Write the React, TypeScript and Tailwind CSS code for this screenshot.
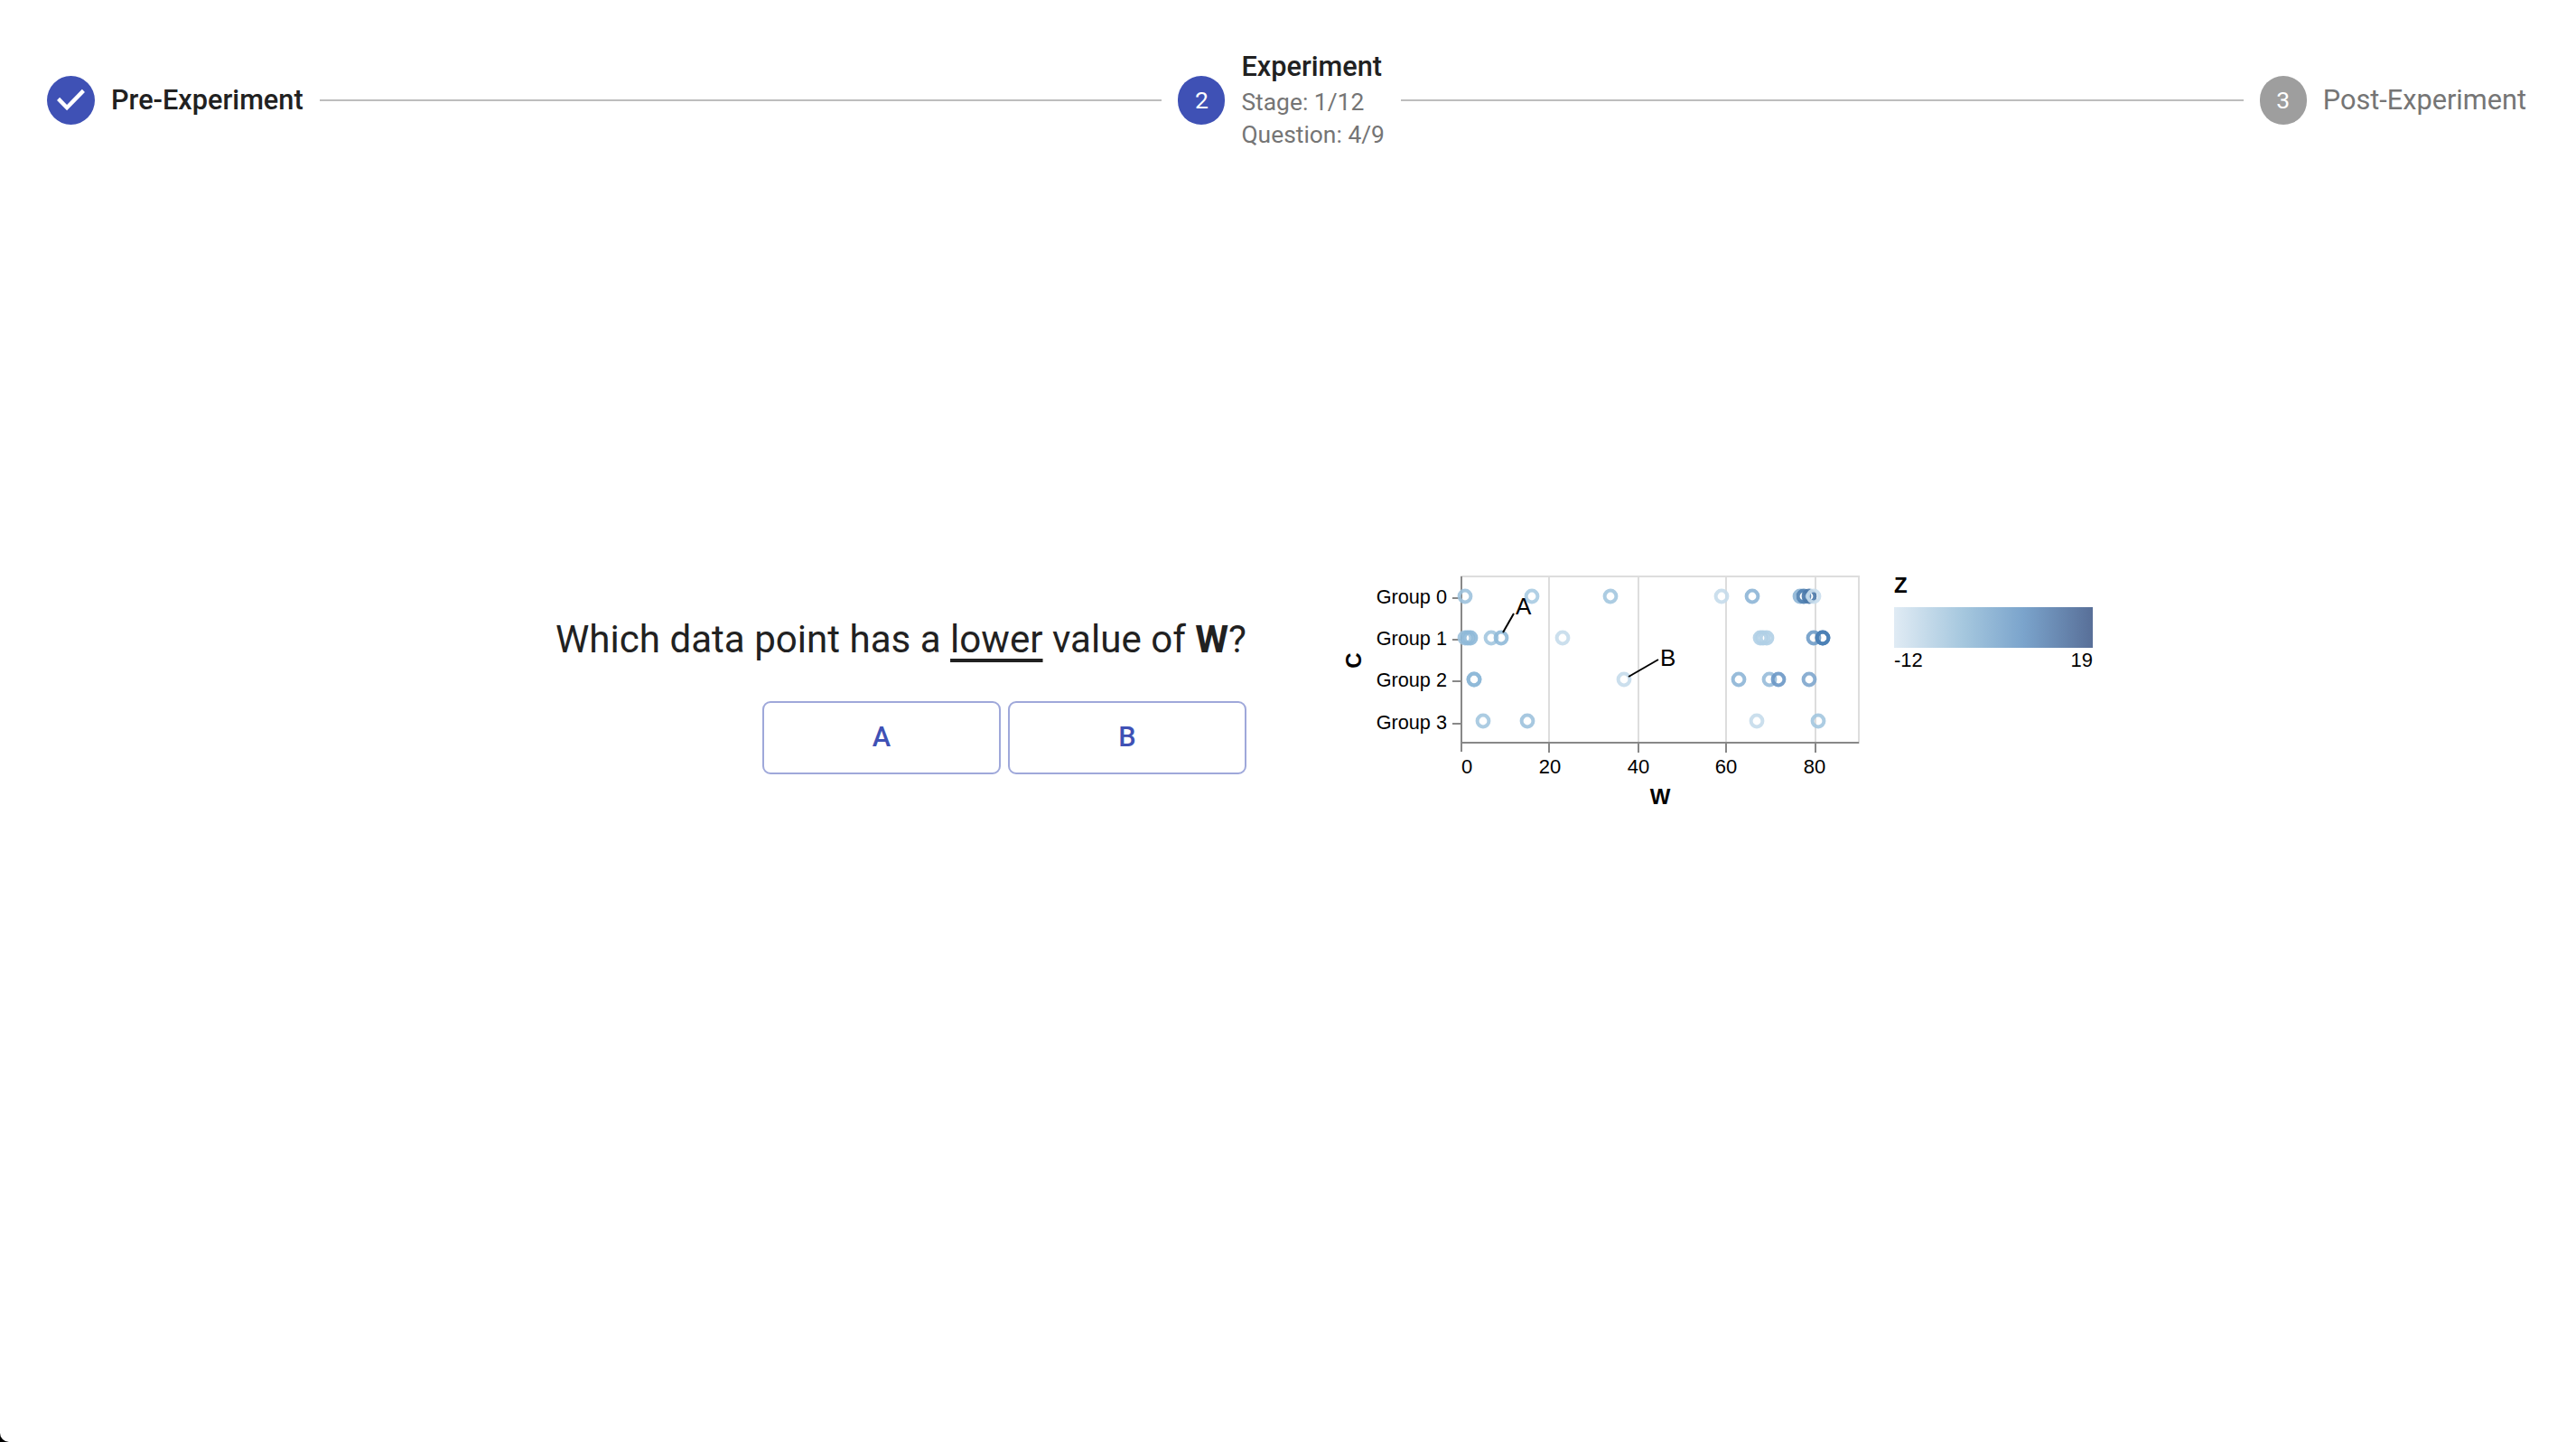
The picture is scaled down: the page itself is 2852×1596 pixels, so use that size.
import React from 'react';

// [x, y, colour] in chart coordinates
const points: [number, number, string][] = [
  [1622, 660, '#9dc2dd'], [1696, 660, '#a9cbe2'], [1783, 660, '#a3c6df'], [1906, 660, '#c5dbeb'],
  [1940, 660, '#8db5d6'], [1993, 660, '#8db5d6'], [1997, 660, '#4f7fb0'], [2003, 660, '#4a78a8'], [2008, 660, '#c9deed'],
  [1622, 706, '#9dc2dd'], [1625, 706, '#8fb9d8'], [1628, 706, '#8fb9d8'], [1651, 706, '#a3c6df'], [1662, 706, '#8fb9d8'],
  [1730, 706, '#c5dbeb'], [1949, 706, '#b0cfe5'], [1952, 706, '#b0cfe5'], [1956, 706, '#b0cfe5'], [2008, 706, '#6f9cc8'],
  [2018, 706, '#4a80b5'], [2018, 706, '#4a80b5'],
  [1632, 752, '#8fb9d8'], [1632, 752, '#8fb9d8'], [1798, 752, '#c5dbeb'], [1925, 752, '#8db5d6'], [1959, 752, '#97bbd9'],
  [1969, 752, '#6a97c5'], [2003, 752, '#7ea6cd'],
  [1642, 798, '#a3c6df'], [1691, 798, '#9dc2dd'], [1945, 798, '#c5dbeb'], [2013, 798, '#a3c6df'],
];

const groups = ['Group 0', 'Group 1', 'Group 2', 'Group 3'];
const xTicks = [1715, 1814, 1911, 2010];

const Chart = () => (
  <svg width={860} height={290} viewBox="1480 620 860 290" className="block shrink-0" fontFamily="'Liberation Sans', Arial, sans-serif">
    <defs>
      <linearGradient id="zscale">
        <stop offset="0" stopColor="#e0ebf4" />
        <stop offset="0.35" stopColor="#a5c7de" />
        <stop offset="0.65" stopColor="#7ba4cc" />
        <stop offset="1" stopColor="#586f98" />
      </linearGradient>
    </defs>

    <rect x={1618} y={638} width={440} height={184} fill="none" stroke="#ddd" strokeWidth={2} />
    {xTicks.map((x) => (
      <line key={x} x1={x} x2={x} y1={638} y2={822} stroke="#ddd" strokeWidth={2} />
    ))}

    <line x1={1618} x2={1618} y1={638} y2={832} stroke="#888" strokeWidth={2} />
    <line x1={1618} x2={2058} y1={822} y2={822} stroke="#888" strokeWidth={2} />
    {xTicks.map((x) => (
      <line key={x} x1={x} x2={x} y1={822} y2={833} stroke="#888" strokeWidth={2} />
    ))}
    {groups.map((g, i) => {
      const y = [662, 708, 754, 801][i];
      return (
        <g key={g}>
          <line x1={1608} x2={1618} y1={y} y2={y} stroke="#888" strokeWidth={2} />
          <text x={1602} y={y + 6} textAnchor="end" fontSize={21.7}>{g}</text>
        </g>
      );
    })}

    {[['0', 1624], ['20', 1716], ['40', 1814], ['60', 1911], ['80', 2009]].map(([label, x]) => (
      <text key={label} x={x} y={856} textAnchor="middle" fontSize={22}>{label}</text>
    ))}
    <text x={1838} y={890} textAnchor="middle" fontSize={24} fontWeight={700}>W</text>
    <text transform="translate(1507 731) rotate(-90)" textAnchor="middle" fontSize={24} fontWeight={700}>C</text>

    {points.map(([x, y, c], i) => (
      <circle key={i} cx={x} cy={y} r={6.4} fill="none" stroke={c} strokeWidth={4} opacity={0.9} />
    ))}

    <line x1={1664} x2={1676} y1={700} y2={679} stroke="#000" strokeWidth={2} />
    <text x={1678} y={680} fontSize={26}>A</text>
    <line x1={1803} x2={1836} y1={749} y2={730} stroke="#000" strokeWidth={2} />
    <text x={1838} y={737} fontSize={26}>B</text>

    <text x={2097} y={656} fontSize={24} fontWeight={700}>Z</text>
    <rect x={2097} y={672} width={220} height={45} fill="url(#zscale)" />
    <text x={2097} y={738} fontSize={22}>-12</text>
    <text x={2317} y={738} textAnchor="end" fontSize={22}>19</text>
  </svg>
);

const StepCircle = ({ n, active }: { n: number; active: boolean }) => (
  <div className={`flex h-[54px] w-[52px] shrink-0 items-center justify-center rounded-full text-[26.5px] text-white ${active ? 'bg-[#3f51b5]' : 'bg-[#9e9e9e]'}`}>
    {n}
  </div>
);

export default function App() {
  return (
    <div className="relative h-[1596px] w-full overflow-hidden bg-white font-['Roboto',sans-serif] text-[#212121]">
      <div className="flex h-[222px] items-center gap-[18px] pl-[52px] pr-[55px]">
        <svg viewBox="0 0 24 24" preserveAspectRatio="none" className="h-[54px] w-[53px] shrink-0" fill="#3f51b5">
          <path d="M12 0a12 12 0 1 0 0 24 12 12 0 0 0 0-24zm-2 17l-5-5 1.4-1.4 3.6 3.6 7.6-7.6L19 8l-9 9z" />
        </svg>
        <span className="text-[30.7px] font-medium">Pre-Experiment</span>
        <div className="h-[2px] flex-1 bg-[#bdbdbd]" />
        <StepCircle n={2} active />
        <div className="flex flex-col">
          <span className="text-[30.7px] font-medium leading-[38px]">Experiment</span>
          <span className="mt-[2px] text-[26.4px] leading-[36px] text-[#757575]">Stage: 1/12</span>
          <span className="text-[26.4px] leading-[36px] text-[#757575]">Question: 4/9</span>
        </div>
        <div className="h-[2px] flex-1 bg-[#bdbdbd]" />
        <StepCircle n={3} active={false} />
        <span className="text-[30.7px] text-[#757575]">Post-Experiment</span>
      </div>

      <div className="mt-[398px] flex items-start pl-[614px]">
        <div className="mt-[50px] flex w-[766px] shrink-0 flex-col items-end">
          <p className="whitespace-nowrap text-[42.1px] leading-[76px]">
            Which data point has a <span className="underline underline-offset-[7px] decoration-[3.5px]">lower</span> value of <strong className="font-bold">W</strong>?
          </p>
          <div className="mt-[30px] flex gap-2">
            {['A', 'B'].map((label) => (
              <button key={label} className="h-[81px] w-[264px] rounded-[9px] border-2 border-[#9fa8da] text-[30.7px] font-medium text-[#3f51b5]">
                {label}
              </button>
            ))}
          </div>
        </div>
        <div className="ml-[100px]">
          <Chart />
        </div>
      </div>

      <svg className="absolute bottom-0 left-0" width={10} height={10} viewBox="0 0 10 10">
        <path d="M0 0A10 10 0 0 0 10 10H0Z" fill="#000" />
      </svg>
    </div>
  );
}
